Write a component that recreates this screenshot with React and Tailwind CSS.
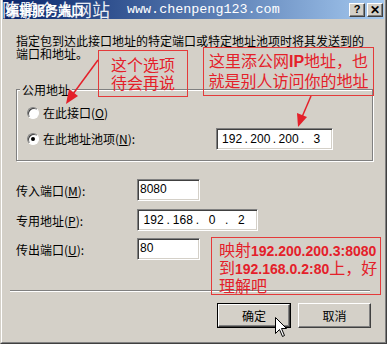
import React from "react";

const cjk = "font-['Noto_Sans_CJK_SC','Noto_Sans',sans-serif]";
const sunken =
  "bg-white border border-t-[#808080] border-l-[#808080] border-b-white border-r-white shadow-[inset_1px_1px_0_#404040,inset_-1px_-1px_0_#d4d0c8]";
const raised =
  "bg-[#d4d0c8] border border-t-white border-l-white border-b-[#404040] border-r-[#404040] shadow-[inset_-1px_-1px_0_#808080,inset_1px_1px_0_#d4d0c8]";
const red = "text-[#e4202a]";
const redBox = "absolute border border-[#e43a3a]";

const IpField = ({ parts, className }) => (
  <div className={`${sunken} ${className} flex items-center px-[3px] font-['Liberation_Sans',sans-serif] text-[12px] text-black`}>
    {parts.map((p, i) => (
      <React.Fragment key={i}>
        <span className="flex-1 text-center">{p}</span>
        {i < parts.length - 1 && <span className="w-[4px] text-center">.</span>}
      </React.Fragment>
    ))}
  </div>
);

const Field = ({ value }) => (
  <div className={`${sunken} w-[63px] h-[22px] pl-[2px] pt-[2px] font-['Liberation_Sans',sans-serif] text-[12px] leading-[15px] text-black`}>
    {value}
  </div>
);

const Hot = ({ k }) => (
  <>
    (<span className="underline">{k}</span>)
  </>
);

const Radio = ({ checked }) => (
  <span className="w-[12px] h-[12px] rounded-full bg-white border border-t-[#808080] border-l-[#808080] border-b-white border-r-white shadow-[inset_1px_1px_0_#404040] flex items-center justify-center">
    {checked && <span className="w-[4px] h-[4px] rounded-full bg-black" />}
  </span>
);

const Row = ({ label, children, className = "" }) => (
  <div className={`flex items-center ${className}`}>
    <span className="w-[121px] text-[12px] leading-[13px]">{label}</span>
    {children}
  </div>
);

export default function App() {
  return (
    <div className={`relative w-[387px] h-[344px] overflow-hidden bg-[#d4d0c8] border-l border-l-[#d4d0c8] border-r border-r-[#404040] border-b border-b-[#404040] ${cjk} text-black`}>
      <div className="h-full border-l border-l-white border-r border-r-[#808080] border-b border-b-[#808080] px-px pb-px">
        {/* title bar */}
        <div className="h-[19px] flex items-center bg-gradient-to-r from-[#0a246a] to-[#a6caf0] text-white">
          <span className="relative w-[121px] pl-[3px] text-[13px] font-bold leading-[15px] whitespace-nowrap">
            编辑服务端口
            <span className="absolute left-[-1px] top-[-3px] text-[18px] font-normal leading-[20px] opacity-90">陈鹏个人网站</span>
          </span>
          <span className="ml-[3px] font-['Liberation_Mono',monospace] text-[13.4px] leading-[15px]">www.chenpeng123.com</span>
          <div className="ml-auto mr-[1px] flex gap-[2px]">
            <span className={`${raised} w-[16px] h-[14px] flex items-center justify-center font-['Liberation_Sans',sans-serif] text-[11px] font-bold text-black leading-none`}>?</span>
            <span className={`${raised} w-[16px] h-[14px] flex items-center justify-center font-['Liberation_Sans',sans-serif] text-[12px] font-bold text-black leading-none`}>✕</span>
          </div>
        </div>

        {/* body */}
        <div className="pl-[13px]">
          <p className="mt-[15px] text-[12px] leading-[13px] w-[350px]">
            指定包到达此接口地址的特定端口或特定地址池项时将其发送到的端口和地址。
          </p>

          <fieldset className="mt-[23px] w-[357px] border border-[#808080] shadow-[1px_1px_0_white,inset_1px_1px_0_white] px-0 pb-[10px]">
            <legend className="ml-[3px] px-[2px] bg-[#d4d0c8] text-[12px] leading-[13px]">公用地址</legend>
            <div className="mt-[9px] h-[16px] flex items-center pl-[10px] gap-[4px] text-[12px]">
              <Radio />
              <span>在此接口<Hot k="O" /></span>
            </div>
            <div className="mt-[7px] h-[22px] flex items-center pl-[10px] gap-[4px] text-[12px]">
              <Radio checked />
              <span className="w-[169px]">在此地址池项<Hot k="N" />:</span>
              <IpField parts={["192", "200", "200", "3"]} className="w-[117px] h-[22px]" />
            </div>
          </fieldset>

          <Row label={<>传入端口<Hot k="M" />:</>} className="mt-[18px]">
            <Field value="8080" />
          </Row>
          <Row label={<>专用地址<Hot k="P" />:</>} className="mt-[8px]">
            <IpField parts={["192", "168", "0", "2"]} className="w-[121px] h-[22px]" />
          </Row>
          <Row label={<>传出端口<Hot k="U" />:</>} className="mt-[7px]">
            <Field value="80" />
          </Row>

          <div className="mt-[30px] ml-[-6px] w-[360px] border-t border-t-[#808080] border-b border-b-white" />

          <div className="mt-[11px] flex gap-[7px] pl-[201px] text-[12px]">
            <div className="border border-black">
              <div className={`${raised} w-[72px] h-[23px] flex items-center justify-center`}>确定</div>
            </div>
            <div className={`${raised} w-[73px] h-[25px] flex items-center justify-center`}>取消</div>
          </div>
        </div>
      </div>

      {/* annotations */}
      <div className={`${redBox} left-[97px] top-[50px] w-[90px] h-[47px] pt-[4px] text-center text-[16px] leading-[18px] ${red}`}>
        这个选项<br />待会再说
      </div>
      <div className={`${redBox} left-[202px] top-[47px] w-[171px] h-[49px] pt-[3px] text-center text-[16px] leading-[18px] whitespace-nowrap ${red}`}>
        这里添公网<b className="font-['Liberation_Sans',sans-serif] font-bold">IP</b>地址，也<br />就是别人访问你的地址
      </div>
      <div className={`${redBox} left-[210px] top-[237px] w-[170px] h-[58px] pl-[7px] pt-[3px] text-[16px] leading-[16px] whitespace-nowrap ${red}`}>
        映射<b className="font-['Liberation_Sans',sans-serif] text-[14px] font-bold">192.200.200.3:8080</b>
        <br />到<b className="font-['Liberation_Sans',sans-serif] text-[14px] font-bold">192.168.0.2:80</b>上，好
        <br />理解吧
      </div>

      <svg className="absolute left-0 top-0 pointer-events-none" width="387" height="344">
        <line x1="97" y1="60" x2="72" y2="94" stroke="#e4202a" strokeWidth="1.5" />
        <polygon points="65,104 68,89 77,96" fill="#e4202a" />
        <line x1="310" y1="96" x2="301" y2="117" stroke="#e4202a" strokeWidth="1.5" />
        <polygon points="297,127 296,113 306,117" fill="#e4202a" />
      </svg>

      <svg className="absolute left-[274px] top-[317px] pointer-events-none" width="14" height="22" viewBox="0 0 14 22">
        <path d="M0.5 0.5 L0.5 16.5 L4.5 12.5 L7.5 19.5 L9.5 18.5 L6.5 11.5 L11.5 11.5 Z" fill="white" stroke="black" strokeWidth="1" />
      </svg>
    </div>
  );
}
